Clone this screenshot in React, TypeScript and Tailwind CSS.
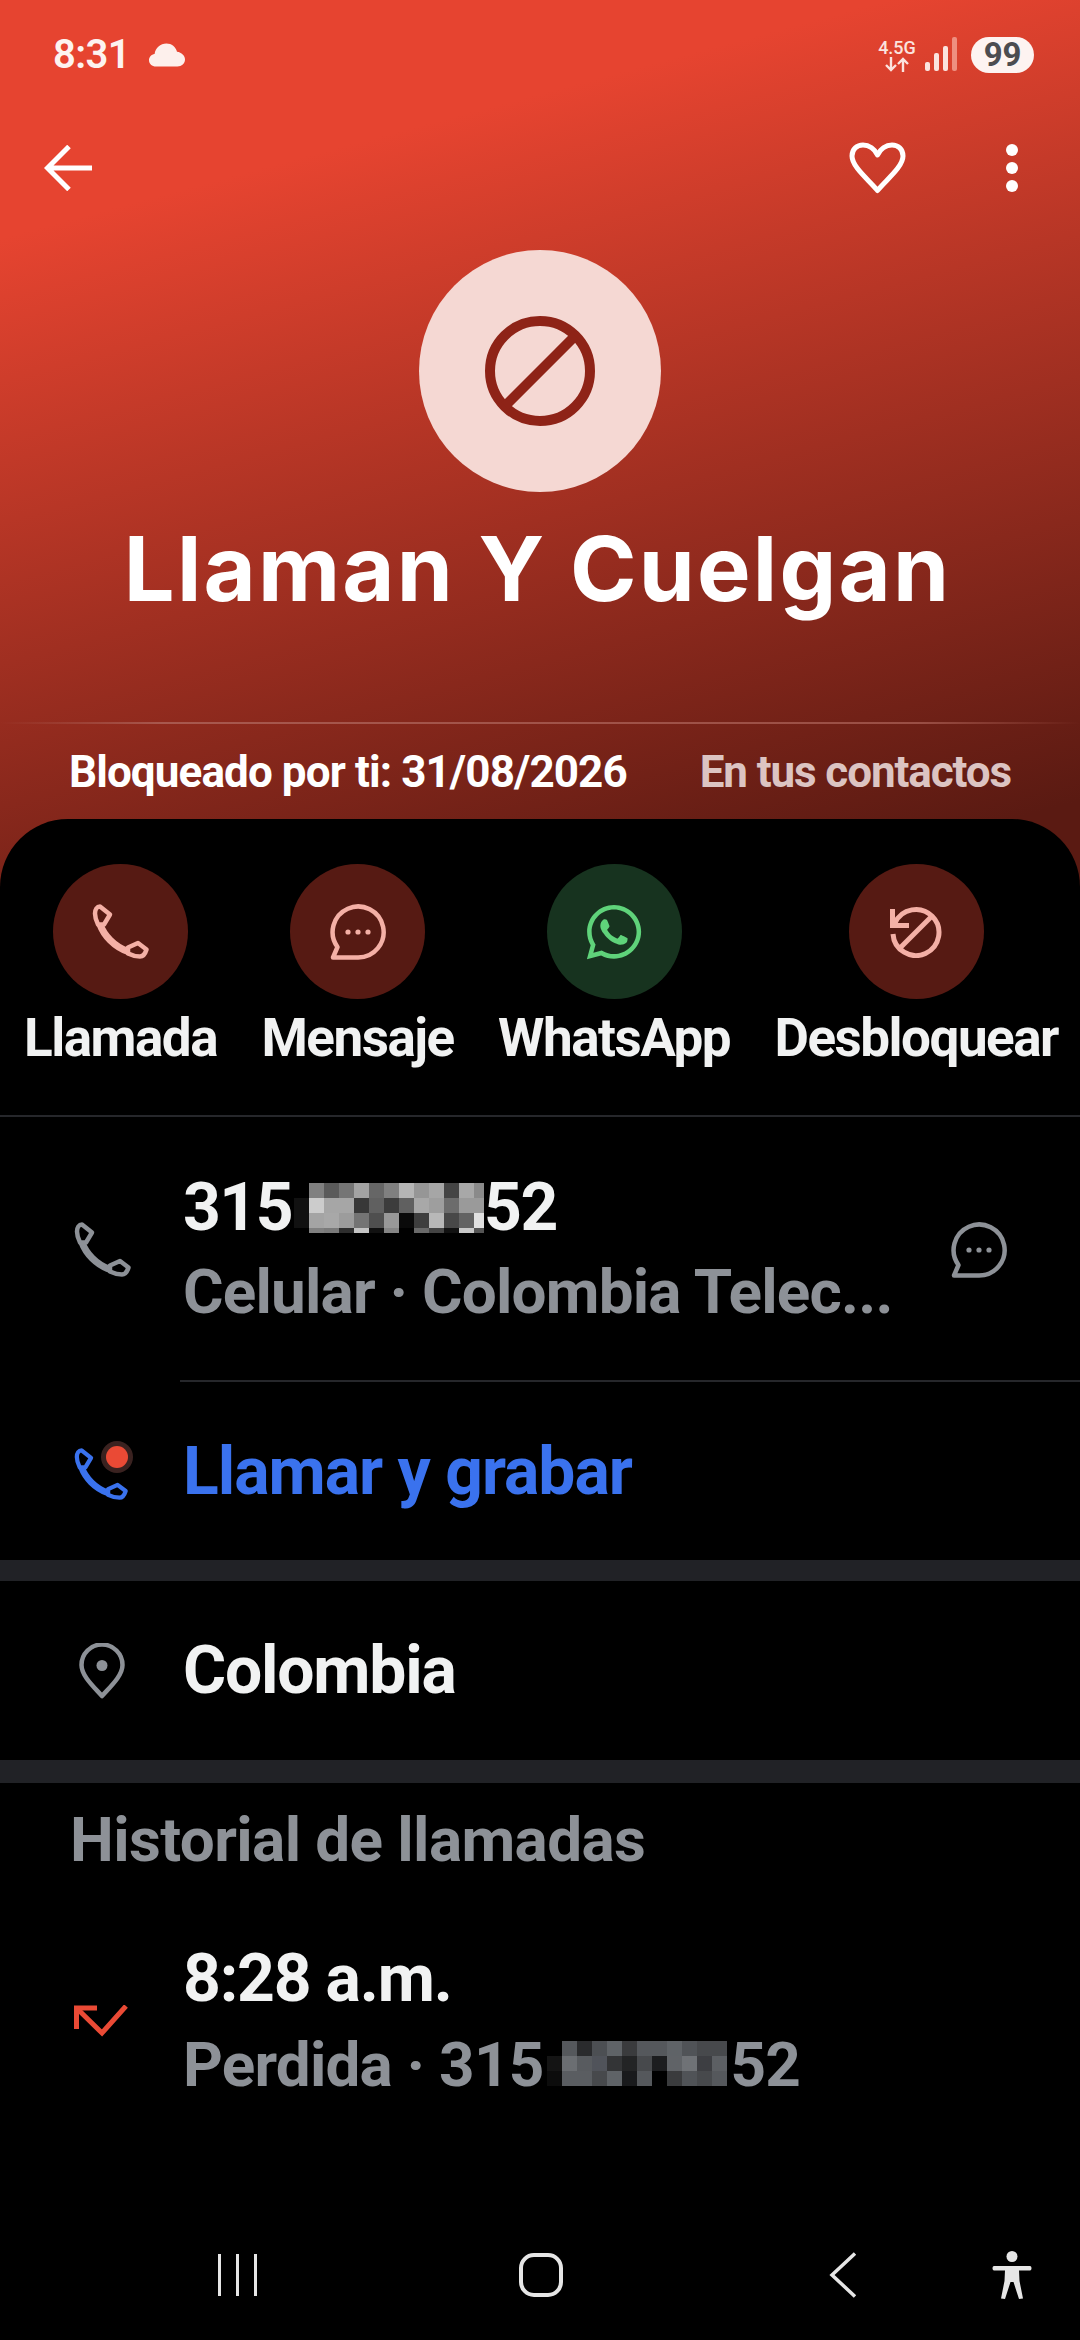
import React from "react";
import { FaWhatsapp } from "react-icons/fa";

const CHAT = "M28 53.5H3L7.5 43A25.5 25.5 0 1 1 28 53.5Z";

function Phone({ color, size = 57 }: { color: string; size?: number }) {
  return (
    <svg width={size} height={size} viewBox="0 0 57 56" fill="none" stroke={color} strokeWidth={4.5} strokeLinejoin="round">
      <path d="M8 3C5 3 3 6 3 10C3 13 4 17 6 21L12 21L18 11Z" />
      <path d="M36 50C40 52 44 53 48 53C51 53 53 51 54.5 46L46 39.5L36 44Z" />
      <path d="M8 21C12 32 22 43 36 48" strokeWidth={7} />
    </svg>
  );
}

function Chat({ color }: { color: string }) {
  return (
    <svg width="56" height="56" viewBox="0 0 56 56" fill="none">
      <path d={CHAT} stroke={color} strokeWidth={4.5} strokeLinejoin="round" />
      <circle cx="18" cy="28" r="2.6" fill={color} />
      <circle cx="28" cy="28" r="2.6" fill={color} />
      <circle cx="38" cy="28" r="2.6" fill={color} />
    </svg>
  );
}

function Unblock({ color }: { color: string }) {
  return (
    <svg width="52" height="52" viewBox="0 0 52 52" fill="none" stroke={color} strokeWidth={5}>
      <path d="M5 17A23 23 0 1 1 3 28" />
      <path d="M43 9L9 43" />
      <path d="M2.5 3V19.5H19" />
    </svg>
  );
}

function Action({ label, bg, children }: { label: string; bg: string; children: React.ReactNode }) {
  return (
    <div className="flex flex-col items-center">
      <div className={`w-[135px] h-[135px] rounded-full flex items-center justify-center ${bg}`}>{children}</div>
      <div className="mt-[5px] h-[70px] flex items-center text-[53px] font-bold text-[#f1f2f2] tracking-[-1.5px] whitespace-nowrap">
        {label}
      </div>
    </div>
  );
}

function Mosaic({ rows, width, height, cell = 15, startX = 15 }: { rows: string[][]; width: number; height: number; cell?: number; startX?: number }) {
  return (
    <svg width={width} height={height} viewBox={`0 0 ${width} ${height}`} className="shrink-0" shapeRendering="crispEdges">
      {rows.map((r, y) =>
        r.map((c, x) =>
          c ? <rect key={`${x}-${y}`} x={x * cell + startX - cell} y={y * cell} width={cell} height={cell} fill={c} /> : null
        )
      )}
    </svg>
  );
}

const M1 = [
  ["", "#808080", "#5a5a5a", "#757575", "#a3a3a3", "#666666", "#808080", "#b5b5b5", "#969696", "#a6a6a6", "#444444", "#a8a8a8", "#8a8a8a"],
  ["#111111", "#cccccc", "#a6a6a6", "#a6a6a6", "#383838", "#606060", "#3c3c3c", "#606060", "#a8a8a8", "#9e9e9e", "#6c6c6c", "#9a9a9a", "#9a9a9a"],
  ["#111111", "#a4a4a4", "#a8a8a8", "#9c9c9c", "#747474", "#4f4f4f", "#989898", "#0a0a0a", "#3e3e3e", "#b8b8b8", "#484848", "#626262", "#e0e0e0"],
  ["", "#808080", "#7a7a7a", "#2e2e2e", "#c4c4c4", "#111111", "#858585", "", "#6a6a6a", "#444444", "#111111", "#c8c8c8", "#555555"],
];
const M2 = [
  ["", "#55585c", "#2a2b2d", "#4c4f53", "#5f6367", "#3a3b3d", "#55585c", "#55585c", "#5f6367", "#505357", "#47494c", "#47494c"],
  ["#141414", "#6b6e72", "#585b5f", "#50535a", "#333436", "#232425", "#47494c", "#1c1d1f", "#606367", "#6f7276", "#3d3e42", "#5c5f63"],
  ["#0c0c0c", "#5a5d61", "#5a5d61", "#47494c", "#5f6367", "#191a1c", "#55585c", "", "#3a3b3d", "#505357", "#47494c", "#55585c"],
];

export default function App() {
  return (
    <div className="w-[1080px] h-[2340px] overflow-hidden flex flex-col [font-family:Roboto,sans-serif] text-white bg-[linear-gradient(165deg,#e64430_230px,#5a1a12_1053px)]">
      {/* status bar */}
      <div className="h-[110px] flex items-center pl-[53px] pr-[46px]">
        <span className="text-[40px] font-semibold tracking-[-0.6px] text-[#fdf3f0]">8:31</span>
        <svg width="36" height="24" viewBox="0 0 36 24" className="ml-[19px]" fill="#fdf0ec">
          <path d="M7 23.5C3 23.5 0 20.8 0 17.2C0 14 2.4 11.5 5.6 11C6.4 5 11.4 0.5 17.4 0.5C22.6 0.5 26.8 4 28 8.8C32.6 9.4 36 12.6 36 16.6C36 20.6 32.6 23.5 28.4 23.5Z" />
        </svg>
        <div className="ml-auto flex items-center">
          <div className="flex flex-col items-center w-[42px]">
            <span className="text-[18px] leading-[19px] font-medium text-[#fbe3de]">4.5G</span>
            <svg width="24" height="15" viewBox="0 0 24 15" fill="none" stroke="#fbe3de" strokeWidth="2.4">
              <path d="M6 0V13M1 8L6 13L11 8" />
              <path d="M18 15V2M13 7L18 2L23 7" />
            </svg>
          </div>
          <svg width="32" height="36" viewBox="0 0 32 36" className="ml-[7px]">
            <rect x="0" y="25" width="5" height="9" rx="2" fill="#fbe3de" />
            <rect x="9" y="16" width="5" height="18" rx="2" fill="#fbe3de" />
            <rect x="18" y="9" width="5" height="25" rx="2" fill="#fbe3de" />
            <rect x="27" y="0" width="5" height="34" rx="2" fill="#ee8f80" />
          </svg>
          <div className="ml-[14px] w-[63px] h-[36px] rounded-full bg-[#fdf3f1] flex items-center justify-center text-[33px] font-bold text-[#4c4c50] tracking-[-0.3px]">
            99
          </div>
        </div>
      </div>

      {/* toolbar */}
      <div className="h-[116px] flex items-center pl-[44px] pr-[62px]">
        <svg width="48" height="46" viewBox="0 0 48 46" fill="none" stroke="#fff" strokeWidth="5">
          <path d="M48 23H4M25 1.5L3.5 23L25 44.5" />
        </svg>
        <svg width="57" height="52" viewBox="0 0 57 52" fill="none" stroke="#fff" strokeWidth="5" strokeLinejoin="round" className="ml-auto">
          <path d="M28.5 48.5C20 38 3 25 3 14C3 7 8 3 14 3C20 3 26 7 28.5 13C31 7 37 3 43 3C49 3 54 7 54 14C54 25 37 38 28.5 48.5Z" />
        </svg>
        <div className="ml-[100px] flex flex-col gap-[6px]">
          <div className="w-[12px] h-[12px] rounded-full bg-white" />
          <div className="w-[12px] h-[12px] rounded-full bg-white" />
          <div className="w-[12px] h-[12px] rounded-full bg-white" />
        </div>
      </div>

      {/* avatar */}
      <div className="mt-[24px] self-center w-[242px] h-[242px] rounded-full bg-[#f5d8d3] flex items-center justify-center">
        <svg width="112" height="112" viewBox="0 0 112 112" fill="none" stroke="#8e2317" strokeWidth="10" className="blur-[0.5px]">
          <circle cx="56" cy="56" r="50" />
          <path d="M21 91L91 21" />
        </svg>
      </div>

      <div className="mt-[16px] h-[120px] pr-[5px] flex items-center justify-center [font-family:Inter,sans-serif] text-[90px] font-bold tracking-[2.2px] whitespace-nowrap">
        Llaman Y Cuelgan
      </div>

      {/* faded divider */}
      <div className="mt-[94px] h-[2px] bg-[linear-gradient(90deg,transparent,#a8584e_15%,#9a4f45_85%,transparent)]" />

      <div className="h-[95px] flex items-center justify-between pl-[69px] pr-[69px] text-[44px] font-bold tracking-[-0.9px]">
        <span className="text-white">Bloqueado por ti: 31/08/2026</span>
        <span className="text-[#dcc4c2] tracking-[-1.1px]">En tus contactos</span>
      </div>

      {/* sheet */}
      <div className="flex-1 bg-black rounded-t-[68px] flex flex-col pt-[45px]">
        <div className="flex justify-between pl-[24px] pr-[22px]">
          <Action label="Llamada" bg="bg-[#561a13]"><Phone color="#f4b0a6" /></Action>
          <Action label="Mensaje" bg="bg-[#561a13]"><Chat color="#f4b0a6" /></Action>
          <Action label="WhatsApp" bg="bg-[#17331f]"><FaWhatsapp size={62} color="#5fd37a" /></Action>
          <Action label="Desbloquear" bg="bg-[#561a13]"><Unblock color="#f4b0a6" /></Action>
        </div>

        <div className="mt-[41px] h-[2px] bg-[#26272b]" />

        {/* number */}
        <div className="h-[263px] flex items-center pl-[74px] pr-[73px] pt-[2px]">
          <div className="w-[109px] shrink-0"><Phone color="#8d9197" /></div>
          <div className="flex-1 min-w-0">
            <div className="h-[84px] flex items-center text-[66px] font-bold text-[#f1f2f2] tracking-[-1.5px]">
              <span>315</span>
              <span className="ml-[2px] flex"><Mosaic rows={M1} width={190} height={50} /></span>
              <span>52</span>
            </div>
            <div className="h-[84px] flex items-center text-[62px] font-bold text-[#8d9197] tracking-[-0.8px] whitespace-nowrap">
              Celular · Colombia Telec...
            </div>
          </div>
          <Chat color="#8d9197" />
        </div>

        <div className="ml-[180px] h-[2px] bg-[#26272b]" />

        <div className="h-[178px] flex items-center pl-[74px]">
          <div className="w-[109px] shrink-0 relative h-[60px]">
            <div className="absolute left-0 top-[6px]">
              <Phone color="#3a72ee" size={54} />
            </div>
            <div className="absolute left-[27px] top-0 w-[32px] h-[32px] rounded-full bg-[#3a2220] flex items-center justify-center">
              <div className="w-[22px] h-[22px] rounded-full bg-[#ea4a35]" />
            </div>
          </div>
          <span className="text-[66px] font-bold text-[#3a72ee] tracking-[-1px]">Llamar y grabar</span>
        </div>

        <div className="h-[21px] bg-[#212226]" />

        <div className="h-[179px] flex items-center pl-[79px]">
          <svg width="46" height="56" viewBox="0 0 46 56" fill="none" className="mr-[58px]">
            <path d="M23 53C15 44 2.5 33 2.5 22A20.5 20.5 0 0 1 43.5 22C43.5 33 31 44 23 53Z" stroke="#8d9197" strokeWidth="4.5" strokeLinejoin="round" />
            <circle cx="23" cy="22.5" r="5.5" fill="#8d9197" />
          </svg>
          <span className="text-[66px] font-bold text-[#f1f2f2] tracking-[-1.2px]">Colombia</span>
        </div>

        <div className="h-[23px] bg-[#212226]" />

        <div className="h-[110px] pt-[3px] flex items-center pl-[70px] text-[62px] font-bold text-[#8d9197] tracking-[-0.6px]">
          Historial de llamadas
        </div>

        <div className="mt-[42px] flex items-center pl-[74px]">
          <svg width="54" height="32" viewBox="0 0 54 32" fill="none" stroke="#ea4a35" strokeWidth="5" className="mr-[55px]">
            <path d="M2.5 24V3H23" />
            <path d="M2.5 3L28 28L52 1" />
          </svg>
          <div>
            <div className="h-[86px] flex items-center text-[66px] font-bold text-[#f1f2f2] tracking-[-1.2px]">8:28 a.m.</div>
            <div className="h-[86px] flex items-center text-[62px] font-bold text-[#8d9197] tracking-[-0.8px]">
              <span>Perdida · 315</span>
              <span className="ml-[4px] flex"><Mosaic rows={M2} width={180} height={47} /></span>
              <span className="ml-[3px]">52</span>
            </div>
          </div>
        </div>

        {/* nav */}
        <div className="mt-auto mb-[40px] h-[50px] flex items-center pl-[218px] text-[#e6e6e6]">
          <div className="flex gap-[15px]">
            <div className="w-[3px] h-[42px] bg-[#e6e6e6]" />
            <div className="w-[3px] h-[42px] bg-[#e6e6e6]" />
            <div className="w-[3px] h-[42px] bg-[#e6e6e6]" />
          </div>
          <div className="ml-[262px] w-[44px] h-[44px] rounded-[15px] border-[4px] border-[#e6e6e6]" />
          <svg width="28" height="46" viewBox="0 0 28 46" fill="none" stroke="#e6e6e6" strokeWidth="3.5" className="ml-[266px]">
            <path d="M26 1.5L3 23L26 44.5" />
          </svg>
          <svg width="40" height="48" viewBox="0 0 40 48" fill="#e6e6e6" className="ml-[135px]">
            <circle cx="20" cy="5.5" r="5.5" />
            <path d="M2 15H38C40 15 40 19.5 38 19.5H27L27.5 30L31 47.5L27 48L21.5 31H18.5L13 48L9 47.5L12.5 30L13 19.5H2C0 19.5 0 15 2 15Z" />
          </svg>
        </div>
      </div>
    </div>
  );
}
